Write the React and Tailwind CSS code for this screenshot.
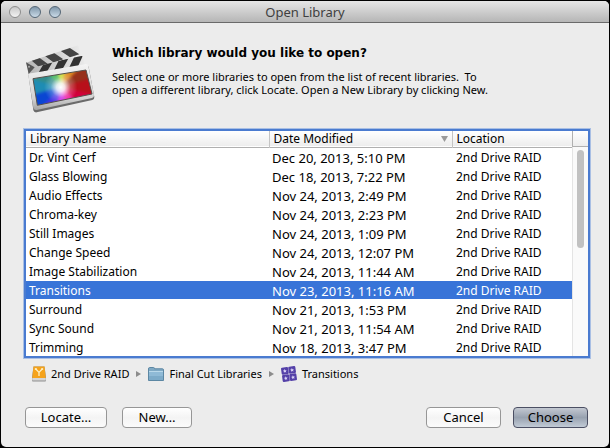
import { useState } from "react";
import clsx from "clsx";

const LIBRARIES = [
  { name: "Dr. Vint Cerf", date: "Dec 20, 2013, 5:10 PM" },
  { name: "Glass Blowing", date: "Dec 18, 2013, 7:22 PM" },
  { name: "Audio Effects", date: "Nov 24, 2013, 2:49 PM" },
  { name: "Chroma-key", date: "Nov 24, 2013, 2:23 PM" },
  { name: "Still Images", date: "Nov 24, 2013, 1:09 PM" },
  { name: "Change Speed", date: "Nov 24, 2013, 12:07 PM" },
  { name: "Image Stabilization", date: "Nov 24, 2013, 11:44 AM" },
  { name: "Transitions", date: "Nov 23, 2013, 11:16 AM" },
  { name: "Surround", date: "Nov 21, 2013, 1:53 PM" },
  { name: "Sync Sound", date: "Nov 21, 2013, 11:54 AM" },
  { name: "Trimming", date: "Nov 18, 2013, 3:47 PM" },
];

const LOCATION = "2nd Drive RAID";

// Colour fan of the clapper screen, clockwise from the top
const FAN = [
  "#c8dc28", "#e08a1e", "#96301a", "#b8101a", "#d2003c", "#f0149b",
  "#c81ee6", "#4632e6", "#0a46d2", "#1e8cb4", "#328c8c", "#3cb450",
];

const wedge = (i) => {
  const point = (deg) => {
    const a = ((deg - 90) * Math.PI) / 180;
    return `${124 + 150 * Math.cos(a)},${140 + 150 * Math.sin(a)}`;
  };
  return `124,140 ${point(i * 30 - 16)} ${point(i * 30 + 16)}`;
};

const ClapperIcon = () => (
  <svg viewBox="15 15 210 204" className="h-[68px] w-[70px] shrink-0" aria-hidden="true">
    <defs>
      <linearGradient id="frame" x1="0" y1="0" x2="0" y2="1">
        <stop offset="0" stopColor="#f4f4f4" />
        <stop offset="0.75" stopColor="#d2d2d2" />
        <stop offset="1" stopColor="#a4a4a4" />
      </linearGradient>
      <linearGradient id="bar" x1="0" y1="0" x2="1" y2="0">
        <stop offset="0" stopColor="#b4b4b4" />
        <stop offset="1" stopColor="#ededed" />
      </linearGradient>
      <radialGradient id="flare" gradientUnits="userSpaceOnUse" cx="122" cy="142" r="50">
        <stop offset="0" stopColor="#fff" />
        <stop offset="0.25" stopColor="#fff" stopOpacity="0.85" />
        <stop offset="0.6" stopColor="#fff" stopOpacity="0.25" />
        <stop offset="1" stopColor="#fff" stopOpacity="0" />
      </radialGradient>
      <filter id="soft" x="-20%" y="-20%" width="140%" height="140%" colorInterpolationFilters="sRGB">
        <feGaussianBlur stdDeviation="5" />
      </filter>
      <clipPath id="screen">
        <path d="M39 116 L198 90 L216 162 L52 196 Z" />
      </clipPath>
      <clipPath id="upper">
        <path d="M18 68 L170 17 Q175 16 176 20 L183 44 L28 86 Z" />
      </clipPath>
      <clipPath id="lower">
        <path d="M24 82 L184 48 Q188 47 189 51 L194 73 L25 101 Z" />
      </clipPath>
    </defs>
    <path d="M25 103 L198 76 Q204 75 206 81 L223 170 Q224 178 217 180 L50 217 Q42 218 40 211 Z" fill="#6b6b6b" />
    <path d="M24 99 L196 72 Q203 71 205 77 L222 164 Q223 172 216 174 L50 210 Q42 211 40 204 Z" fill="url(#frame)" />
    <g clipPath="url(#screen)">
      <g filter="url(#soft)">
        {FAN.map((color, i) => (
          <polygon key={color} points={wedge(i)} fill={color} />
        ))}
      </g>
      <rect x="30" y="80" width="200" height="130" fill="url(#flare)" />
    </g>
    <path d="M39 116 L198 90 L216 162 L52 196 Z" fill="none" stroke="#55504c" strokeWidth="3" />
    <g clipPath="url(#lower)">
      <rect x="15" y="40" width="190" height="70" fill="url(#bar)" />
      <path d="M52 104 L74 66 L100 62 L78 100 Z M98 98 L118 58 L146 54 L124 94 Z M144 90 L164 48 L190 44 L170 88 Z" fill="#333" />
    </g>
    <g clipPath="url(#upper)">
      <rect x="15" y="10" width="175" height="80" fill="url(#bar)" />
      <path d="M30 58 L54 50 L84 72 L58 82 Z M72 46 L98 36 L130 58 L102 68 Z M118 30 L144 20 L178 43 L150 52 Z" fill="#444" />
    </g>
    <path d="M18 67 L44 82 L26 102 Z" fill="#555" />
    <circle cx="27" cy="80" r="3" fill="#aaa" />
  </svg>
);

const DriveIcon = () => (
  <svg viewBox="0 0 14 16" className="h-4 w-[14px]" aria-hidden="true">
    <path d="M1.5 .5h11L14 11v3.5q0 .9-.9.9H.9q-.9 0-.9-.9V11z" fill="#8f8f8f" />
    <path d="M1.5 .5h11L13.8 12H.2z" fill="#f5a31c" />
    <path d="M.2 12h13.6v2q0 .5-.5.5H.7q-.5 0-.5-.5z" fill="#d6d6d6" />
    <path d="M3.8 3 L7 6.4 L10.2 3 M7 6.4V10" stroke="#fff0c4" strokeWidth="1.3" fill="none" />
    <circle cx="3.8" cy="3" r="1.1" fill="#fff0c4" />
    <circle cx="10.2" cy="3" r="1.1" fill="#fff0c4" />
  </svg>
);

const FolderIcon = () => (
  <svg viewBox="0 0 16 14" className="h-[14px] w-4" aria-hidden="true">
    <path d="M.5 2 Q.5.5 1.5.5 H5.5 Q6.5.5 6.5 1.8 H14.5 Q15.5 1.8 15.5 3 V13.5 H.5 Z" fill="#7fa9c4" stroke="#5c87a3" />
    <path d="M1 4 H15 V13 H1 Z" fill="#8fbad6" />
    <path d="M1 4.5 H15" stroke="#b9d8ea" />
    <path d="M1 9 H15 V13 H1 Z" fill="#7dabc9" />
  </svg>
);

const LibraryIcon = () => (
  <svg viewBox="0 0 16 16" className="size-4" aria-hidden="true">
    <g transform="rotate(-8 8 8)">
      {[[0.8, 0.8], [8.1, 0.8], [0.8, 8.1], [8.1, 8.1]].map(([x, y]) => (
        <g key={`${x}-${y}`} transform={`translate(${x} ${y})`}>
          <rect width="7.1" height="7.1" rx="1.2" fill="#5440a8" />
          <path d="M3.5 1.7l.6 1.2 1.3.2-.9.9.2 1.3-1.2-.6-1.2.6.2-1.3-.9-.9 1.3-.2z" fill="#d9d2f5" />
        </g>
      ))}
    </g>
  </svg>
);

const Arrow = () => (
  <svg viewBox="0 0 5 6" className="mx-0.5 h-[6px] w-[5px]" aria-hidden="true">
    <path d="M0 0 L5 3 L0 6 Z" fill="#8c8c8c" />
  </svg>
);

const PushButton = ({ children, primary, className }) => (
  <button
    type="button"
    className={clsx(
      "h-[21px] rounded border text-[13px] leading-[19px] text-black",
      primary
        ? "border-[#4b4f63] bg-linear-to-b from-[#c3c8d1] via-[#98a2b0] to-[#c2cbd6]"
        : "border-[#969696] bg-linear-to-b from-white via-[#f4f4f4] to-[#fbfbfb]",
      className
    )}
  >
    {children}
  </button>
);

export default function App() {
  const [selected, setSelected] = useState("Transitions");

  return (
    <div className="h-screen bg-black p-px font-['Noto_Sans','Lucida_Grande',sans-serif] text-black">
      <main className="flex h-full flex-col overflow-hidden rounded-[5px] bg-[#ececec]">
        <header className="grid h-[22px] shrink-0 grid-cols-[1fr_auto_1fr] items-center border-b border-[#6a6a6a] bg-linear-to-b from-[#e6e6e6] to-[#b6b6b6] px-2">
          <div className="flex gap-2">
            <button type="button" aria-label="Close" className="size-3 rounded-full border border-[#8c8c8c] bg-linear-to-b from-[#c8c8c8] to-[#f4f4f4]" />
            <button type="button" aria-label="Minimize" className="size-3 rounded-full border border-[#536575] bg-linear-to-b from-[#8097aa] to-[#cbdbe8]" />
            <button type="button" aria-label="Zoom" className="size-3 rounded-full border border-[#536575] bg-linear-to-b from-[#8097aa] to-[#cbdbe8]" />
          </div>
          <h1 className="text-[13px] leading-[20px] text-[#404040]">Open Library</h1>
        </header>

        <section className="flex shrink-0 gap-[17px] px-6 pt-[22px]">
          <ClapperIcon />
          <div>
            <h2 className="font-['DejaVu_Sans',sans-serif] text-[12px] leading-4 font-bold">
              Which library would you like to open?
            </h2>
            <p className="mt-[9px] text-[11px] leading-[13px] whitespace-pre">
              {"Select one or more libraries to open from the list of recent libraries.  To\nopen a different library, click Locate. Open a New Library by clicking New."}
            </p>
          </div>
        </section>

        {/* Recent libraries */}
        <div className="mr-[19px] ml-[23px] mt-4 flex min-h-0 flex-1 overflow-hidden border-2 border-[#4a7bd0] bg-white ring-1 ring-[#a9bfe4]">
          <table className="h-min flex-1 table-fixed border-collapse text-left text-[12px]">
            <thead>
              <tr className="h-4 border-b border-[#b0b0b0] bg-linear-to-b from-white to-[#ededed] leading-[14px]">
                <th className="w-[243px] border-r border-[#c4c4c4] px-1 pt-px font-normal">Library Name</th>
                <th className="w-[183px] border-r border-[#c4c4c4] px-1 pt-px font-normal" aria-sort="descending">
                  <div className="flex items-center justify-between">
                    Date Modified
                    <svg viewBox="0 0 7 6" className="h-[6px] w-[7px]" aria-hidden="true">
                      <path d="M0 0 H7 L3.5 6 Z" fill="#9a9a9a" />
                    </svg>
                  </div>
                </th>
                <th className="px-1 pt-px font-normal">Location</th>
              </tr>
            </thead>
            <tbody>
              {LIBRARIES.map(({ name, date }) => (
                <tr
                  key={name}
                  onClick={() => setSelected(name)}
                  aria-selected={name === selected}
                  className={clsx(
                    "h-[19px] border-b border-white leading-4",
                    name === selected && "bg-[#3874d8] text-white"
                  )}
                >
                  <td className="px-[3px] pt-0.5">{name}</td>
                  <td className="px-[3px] pt-0.5 text-[13px]">{date}</td>
                  <td className="px-1 pt-0.5">{LOCATION}</td>
                </tr>
              ))}
            </tbody>
          </table>
          <div className="flex w-4 flex-col">
            <div className="h-4 shrink-0 border-b border-l border-[#b0b0b0] bg-linear-to-b from-white to-[#ededed]" />
            <div className="flex-1 border-l border-[#e4e4e4] bg-[#fafafa] px-1 pt-[3px]">
              <div className="h-[98px] rounded-full bg-[#c1c1c1]" />
            </div>
          </div>
        </div>

        <nav aria-label="Path" className="mx-[31px] mt-2 flex h-4 shrink-0 items-center gap-[5px] text-[11px] leading-4">
          <DriveIcon />
          <span>2nd Drive RAID</span>
          <Arrow />
          <FolderIcon />
          <span>Final Cut Libraries</span>
          <Arrow />
          <LibraryIcon />
          <span>Transitions</span>
        </nav>

        <footer className="flex shrink-0 pr-[21px] pl-6 pt-[25px] pb-[19px]">
          <PushButton className="w-[82px]">Locate…</PushButton>
          <PushButton className="ml-[15px] w-[70px]">New…</PushButton>
          <PushButton className="ml-auto w-[75px]">Cancel</PushButton>
          <PushButton primary className="ml-3 w-[75px]">Choose</PushButton>
        </footer>
      </main>
    </div>
  );
}
